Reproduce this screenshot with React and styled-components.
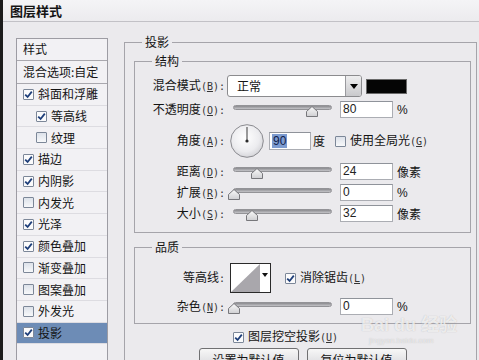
import React from 'react';
import styled, { createGlobalStyle } from 'styled-components';

const GlobalStyle = createGlobalStyle`
  html, body { margin: 0; padding: 0; background: #ebeaed; }
  body {
    font-family: "Noto Sans CJK SC", "Noto Sans", sans-serif;
    font-size: 12px;
    color: #141414;
  }
`;

const Window = styled.div`
  position: relative;
  width: 479px;
  height: 360px;
  overflow: hidden;
  box-sizing: border-box;
  border-left: 3px solid #1c1c1c;
  background: #ebeaed;
  display: flex;
  flex-direction: column;
`;

const TitleBar = styled.div`
  height: 22px;
  flex: none;
  box-sizing: border-box;
  border-bottom: 1px solid #c2c1c6;
  padding-left: 7px;
  display: flex;
  align-items: center;
  font-weight: 700;
  font-size: 13px;
  line-height: 16px;
  background: linear-gradient(#f4f4f6, #ecebee);
`;

const Body = styled.div`
  flex: 1;
  display: flex;
  align-items: flex-start;
  padding: 12px 2px 0 13px;
  min-height: 0;
`;

const StyleList = styled.div`
  width: 92px;
  flex: none;
  box-sizing: border-box;
  margin-top: 4px;
  height: 340px;
  border: 1px solid #9d9ca3;
  background: #f2f1f4;
  display: flex;
  flex-direction: column;
`;

const ListHeader = styled.div`
  height: 22px;
  box-sizing: border-box;
  border-bottom: 1px solid #a9a8ae;
  padding: 2px 0 0 6px;
  line-height: 16px;
`;

const ListItem = styled.div`
  height: ${p => p.$h || 21.7}px;
  box-sizing: border-box;
  border-bottom: 1px solid ${p => (p.$strong ? '#a9a8ae' : '#dddce1')};
  display: flex;
  align-items: center;
  gap: 4px;
  padding-left: ${p => (p.$indent ? 19 : 6)}px;
  background: ${p => (p.$selected ? '#6d8cb6' : 'transparent')};
  line-height: 16px;
  white-space: nowrap;
`;

const Box = styled.span`
  width: 11px;
  height: 11px;
  flex: none;
  box-sizing: border-box;
  border: 1px solid #7c8798;
  border-radius: 1px;
  background: ${p => (p.$checked ? '#fbfbfc' : 'linear-gradient(#dde2ea, #f7f8fa)')};
  display: inline-flex;
  align-items: center;
  justify-content: center;
  margin-left: ${p => p.$ml || 0}px;
`;

const Checkbox = ({ checked, ml }) => (
  <Box $checked={checked} $ml={ml}>
    {checked && (
      <svg width="9" height="9" viewBox="0 0 9 9">
        <path d="M1.2 4.6 L3.6 7 L7.8 1.6" stroke="#1f3f7a" strokeWidth="1.8" fill="none" />
      </svg>
    )}
  </Box>
);

const RightPanel = styled.fieldset`
  flex: 1;
  margin: 0 0 0 16px;
  padding: 0;
  min-width: 0;
  min-height: 340px;
  border: 1px solid #a5a4aa;
`;

const Group = styled.fieldset`
  margin: ${p => p.$mt || 0}px 0 0 0;
  padding: 0;
  min-width: 0;
  border: 1px solid #a5a4aa;
`;

const Legend = styled.legend`
  margin-left: 17px;
  padding: 0 3px;
  font-size: 12px;
  line-height: 16px;
  height: 16px;
`;

const PanelBody = styled.div`
  padding: 3px 5px 0 9px;
  display: flex;
  flex-direction: column;
`;

const GroupBody = styled.div`
  padding: ${p => p.$pt}px 0 ${p => p.$pb}px 0;
  display: flex;
  flex-direction: column;
`;

const Row = styled.div`
  display: flex;
  align-items: center;
  height: ${p => p.$h}px;
  margin-top: ${p => p.$mt || 0}px;
  white-space: nowrap;
`;

const Label = styled.span`
  width: 90px;
  flex: none;
  text-align: right;
  line-height: 16px;
`;

const Key = styled.span`
  font-family: "DejaVu Sans Mono", monospace;
  font-size: 10px;
  color: #333;
  u { text-decoration-thickness: 1px; text-underline-offset: 1px; }
`;

const Text = styled.span`
  margin-left: ${p => p.$ml || 0}px;
  line-height: 16px;
`;

const Unit = styled.span`
  margin-left: ${p => p.$ml || 4}px;
  font-family: ${p => (p.$latin ? '"Liberation Sans", sans-serif' : 'inherit')};
  font-size: 12px;
  line-height: 16px;
`;

const Select = styled.div`
  margin-left: 2px;
  width: 135px;
  height: 22px;
  box-sizing: border-box;
  border: 1px solid #8b8b8e;
  border-radius: 3px;
  background: #fff;
  display: flex;
  overflow: hidden;
`;

const SelectValue = styled.span`
  flex: 1;
  padding-left: 9px;
  line-height: 20px;
`;

const SelectArrow = styled.span`
  width: 15px;
  border-left: 1px solid #9a9a9e;
  background: linear-gradient(#eeeeef, #c9c9cc);
  display: flex;
  align-items: center;
  justify-content: center;
`;

const Swatch = styled.span`
  margin-left: 4px;
  width: 41px;
  height: 15px;
  box-sizing: border-box;
  border: 1px solid #6a6a6a;
  background: #050505;
`;

const SliderWrap = styled.div`
  position: relative;
  margin-left: 8px;
  width: 99px;
  height: 17px;
  flex: none;
`;

const Track = styled.div`
  position: absolute;
  left: 0;
  right: 0;
  top: 4px;
  height: 5px;
  box-sizing: border-box;
  border: 1px solid #939397;
  border-radius: 3px;
  background: linear-gradient(#8a8a8e, #c4c4c8);
`;

const Thumb = styled.svg`
  position: absolute;
  top: 5px;
  margin-left: -6px;
`;

const Slider = ({ pct }) => (
  <SliderWrap>
    <Track />
    <Thumb width="12" height="11" viewBox="0 0 12 11" style={{ left: `${pct}%` }}>
      <defs>
        <linearGradient id="tg" x1="0" y1="0" x2="0" y2="1">
          <stop offset="0" stopColor="#fafafa" />
          <stop offset="1" stopColor="#cfcfd2" />
        </linearGradient>
      </defs>
      <path d="M6 0.5 L11.5 5.5 L11.5 10.5 L0.5 10.5 L0.5 5.5 Z" fill="url(#tg)" stroke="#77777b" strokeWidth="1" />
    </Thumb>
  </SliderWrap>
);

const Input = styled.div`
  margin-left: ${p => p.$ml || 8}px;
  width: ${p => p.$w || 53}px;
  height: ${p => p.$h || 17}px;
  box-sizing: border-box;
  border: 1px solid #abadb3;
  border-top-color: #8f939a;
  background: #fff;
  padding-left: 2px;
  font-family: "Liberation Sans", sans-serif;
  font-size: 12px;
  line-height: ${p => (p.$h || 17) - 2}px;
  color: #222;
`;

const Selected = styled.span`
  background: #7c9bd0;
  color: #10204a;
  padding: 0 1px;
`;

const Dial = styled.svg`
  margin-left: 5px;
  flex: none;
`;

const Contour = styled.div`
  margin-left: 5px;
  height: 30px;
  width: 41px;
  box-sizing: border-box;
  border: 1px solid #2a2a2a;
  display: flex;
  background: #fff;
`;

const ContourArrow = styled.span`
  flex: 1;
  display: flex;
  align-items: center;
  justify-content: center;
  padding-bottom: 6px;
`;

const KnockRow = styled.div`
  display: flex;
  align-items: center;
  gap: 4px;
  height: 14px;
  margin-top: 6px;
  padding-left: 99px;
  line-height: 16px;
`;

const ButtonRow = styled.div`
  display: flex;
  justify-content: center;
  gap: 8px;
  margin-top: 4px;
`;

const Button = styled.div`
  width: 100px;
  height: 24px;
  box-sizing: border-box;
  border: 1px solid #707072;
  border-radius: 3px;
  background: linear-gradient(#f7f7f7, #e4e4e6 50%, #d6d6d9);
  text-align: center;
  line-height: 22px;
`;

const Watermark = styled.div`
  position: absolute;
  left: 358px;
  top: 316px;
  font-family: "Liberation Sans", "Noto Sans CJK SC", sans-serif;
  font-weight: 700;
  font-size: 18px;
  line-height: 18px;
  color: rgba(255, 255, 255, 0.72);
  text-shadow: 0 0 1px rgba(90, 90, 90, 0.35);
  pointer-events: none;
  small {
    display: block;
    font-size: 8px;
    font-weight: 400;
    line-height: 10px;
    margin: 2px 0 0 8px;
    color: rgba(255, 255, 255, 0.6);
  }
`;

const items = [
  { t: '斜面和浮雕', c: true },
  { t: '等高线', c: true, i: true },
  { t: '纹理', c: false, i: true },
  { t: '描边', c: true },
  { t: '内阴影', c: true },
  { t: '内发光', c: false },
  { t: '光泽', c: true },
  { t: '颜色叠加', c: true },
  { t: '渐变叠加', c: false },
  { t: '图案叠加', c: false },
  { t: '外发光', c: false },
  { t: '投影', c: true, s: true },
];

const L = ({ text, k }) => (
  <Label>
    {text}
    <Key>
      {k ? <>(<u>{k}</u>)</> : null}:
    </Key>
  </Label>
);

export default function App() {
  return (
    <>
      <GlobalStyle />
      <Window>
        <TitleBar>图层样式</TitleBar>
        <Body>
          <StyleList>
            <ListHeader>样式</ListHeader>
            <ListItem $strong $h={23}>混合选项:自定</ListItem>
            {items.map(it => (
              <ListItem key={it.t} $indent={it.i} $selected={it.s}>
                <Checkbox checked={it.c} />
                {it.t}
              </ListItem>
            ))}
          </StyleList>

          <RightPanel>
            <Legend>投影</Legend>
            <PanelBody>
              <Group>
                <Legend>结构</Legend>
                <GroupBody $pt={6} $pb={10}>
                  <Row $h={22}>
                    <L text="混合模式" k="B" />
                    <Select>
                      <SelectValue>正常</SelectValue>
                      <SelectArrow>
                        <svg width="8" height="5" viewBox="0 0 8 5">
                          <path d="M0 0 H8 L4 5 Z" fill="#000" />
                        </svg>
                      </SelectArrow>
                    </Select>
                    <Swatch />
                  </Row>
                  <Row $h={17} $mt={4}>
                    <L text="不透明度" k="O" />
                    <Slider pct={80} />
                    <Input>80</Input>
                    <Unit $latin>%</Unit>
                  </Row>
                  <Row $h={34} $mt={6}>
                    <L text="角度" k="A" />
                    <Dial width="34" height="34" viewBox="0 0 34 34">
                      <defs>
                        <radialGradient id="dg" cx="0.45" cy="0.4" r="0.6">
                          <stop offset="0" stopColor="#ffffff" />
                          <stop offset="0.7" stopColor="#ececef" />
                          <stop offset="1" stopColor="#d6d6da" />
                        </radialGradient>
                      </defs>
                      <circle cx="17" cy="17" r="16.3" fill="url(#dg)" stroke="#8a8a8f" strokeWidth="1" />
                      <line x1="17" y1="17" x2="17" y2="3" stroke="#3a3a3a" strokeWidth="1" />
                      <circle cx="17" cy="17" r="1.6" fill="#2a2a2a" />
                    </Dial>
                    <Input $ml={5} $w={42} $h={18}>
                      <Selected>90</Selected>
                    </Input>
                    <Unit $ml={2}>度</Unit>
                    <Checkbox checked={false} ml={10} />
                    <Text $ml={4}>
                      使用全局光<Key>(<u>G</u>)</Key>
                    </Text>
                  </Row>
                  <Row $h={17} $mt={5}>
                    <L text="距离" k="D" />
                    <Slider pct={24} />
                    <Input>24</Input>
                    <Unit>像素</Unit>
                  </Row>
                  <Row $h={17} $mt={4}>
                    <L text="扩展" k="R" />
                    <Slider pct={1} />
                    <Input>0</Input>
                    <Unit $latin>%</Unit>
                  </Row>
                  <Row $h={17} $mt={4}>
                    <L text="大小" k="S" />
                    <Slider pct={19} />
                    <Input>32</Input>
                    <Unit>像素</Unit>
                  </Row>
                </GroupBody>
              </Group>

              <Group $mt={6}>
                <Legend>品质</Legend>
                <GroupBody $pt={8} $pb={8}>
                  <Row $h={30}>
                    <L text="等高线" />
                    <Contour>
                      <svg width="29" height="28" viewBox="0 0 29 28">
                        <rect width="29" height="28" fill="#fff" />
                        <path d="M0 28 L29 0 L29 28 Z" fill="#a9a7ac" />
                      </svg>
                      <ContourArrow>
                        <svg width="6" height="4" viewBox="0 0 6 4">
                          <path d="M0 0 H6 L3 4 Z" fill="#111" />
                        </svg>
                      </ContourArrow>
                    </Contour>
                    <Checkbox checked ml={14} />
                    <Text $ml={4}>
                      消除锯齿<Key>(<u>L</u>)</Key>
                    </Text>
                  </Row>
                  <Row $h={17} $mt={5}>
                    <L text="杂色" k="N" />
                    <Slider pct={1} />
                    <Input>0</Input>
                    <Unit $latin>%</Unit>
                  </Row>
                </GroupBody>
              </Group>

              <KnockRow>
                <Checkbox checked />
                <span>
                  图层挖空投影<Key>(<u>U</u>)</Key>
                </span>
              </KnockRow>

              <ButtonRow>
                <Button>设置为默认值</Button>
                <Button>复位为默认值</Button>
              </ButtonRow>
            </PanelBody>
          </RightPanel>
        </Body>
        <Watermark>
          Bai du 经验
          <small>jingyan.baidu.com</small>
        </Watermark>
      </Window>
    </>
  );
}
